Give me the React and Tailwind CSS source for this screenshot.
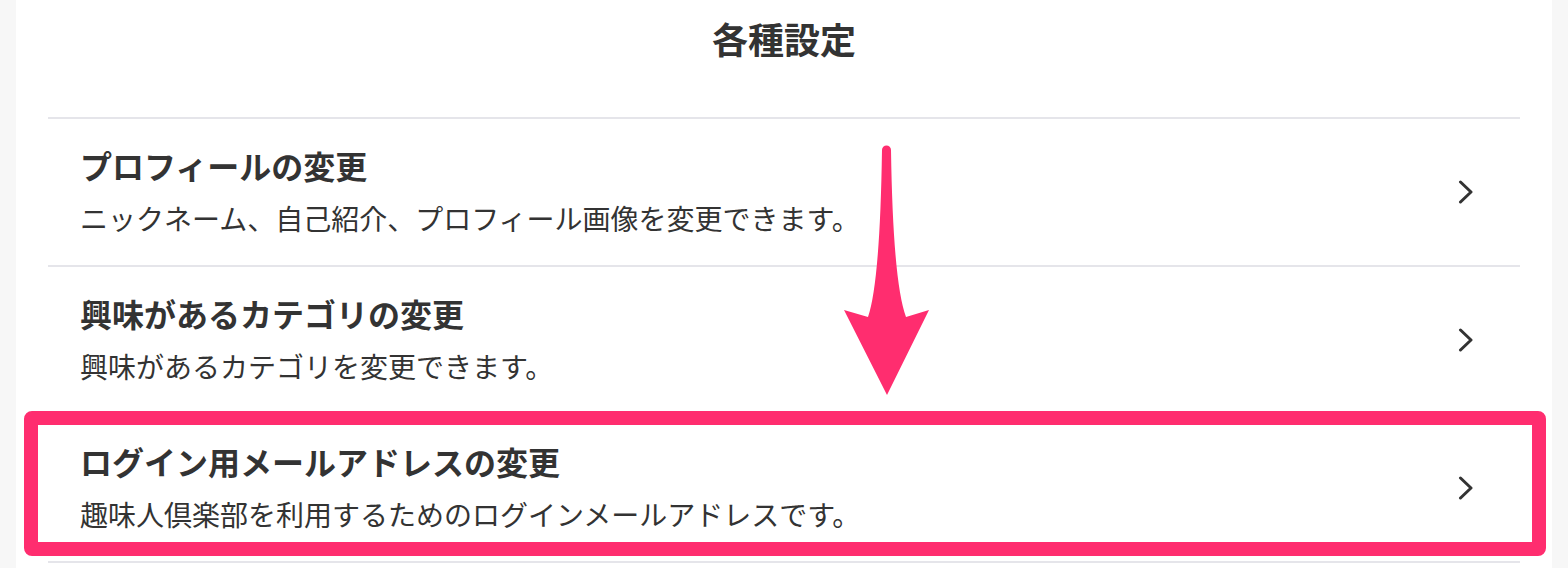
import React from "react";

const rows = [
  { title: "プロフィールの変更", desc: "ニックネーム、自己紹介、プロフィール画像を変更できます。" },
  { title: "興味があるカテゴリの変更", desc: "興味があるカテゴリを変更できます。" },
  { title: "ログイン用メールアドレスの変更", desc: "趣味人倶楽部を利用するためのログインメールアドレスです。" },
];

function Chevron() {
  return (
    <svg width="16" height="24" viewBox="0 0 16 24" fill="none">
      <path d="M2.5 2 L13 12 L2.5 22" stroke="#333333" strokeWidth="3" strokeLinecap="round" strokeLinejoin="round" />
    </svg>
  );
}

export default function App() {
  return (
    <div
      className="relative w-[1568px] h-[568px] overflow-hidden bg-[#f7f7f7]"
      style={{ fontFamily: '"Noto Sans CJK JP", "Noto Sans", sans-serif' }}
    >
      <div className="mx-4 h-full bg-white">
        <div className="flex h-[117px] justify-center pt-[11px]">
          <h1 className="text-[36px] leading-[54px] font-bold text-[#333333]">各種設定</h1>
        </div>
        <div className="mx-8">
          {rows.map((r) => (
            <div key={r.title} className="flex items-center border-t-2 border-[#e5e5ea]">
              <div className="flex-1 pl-8 pt-[22px] pb-[26px]">
                <div className="text-[32px] leading-[48px] font-bold text-[#333333]">{r.title}</div>
                <div className="mt-2 text-[28px] leading-[42px] text-[#333333]">{r.desc}</div>
              </div>
              <div className="pr-[46px]">
                <Chevron />
              </div>
            </div>
          ))}
          <div className="border-t-2 border-[#e5e5ea]" />
        </div>
      </div>

      <div className="absolute left-[24px] top-[411px] w-[1522px] h-[145px] rounded-[8px] border-[14px] border-[#ff2d6f]" />

      <svg className="absolute left-0 top-0" width="1568" height="568" viewBox="0 0 1568 568">
        <path
          d="M882 150 Q880 282 868 317 L844 310 L887 395 L929 310 L906 317 Q893 282 891 150 A4.5 4.5 0 0 0 882 150 Z"
          fill="#ff2d6f"
        />
      </svg>
    </div>
  );
}
